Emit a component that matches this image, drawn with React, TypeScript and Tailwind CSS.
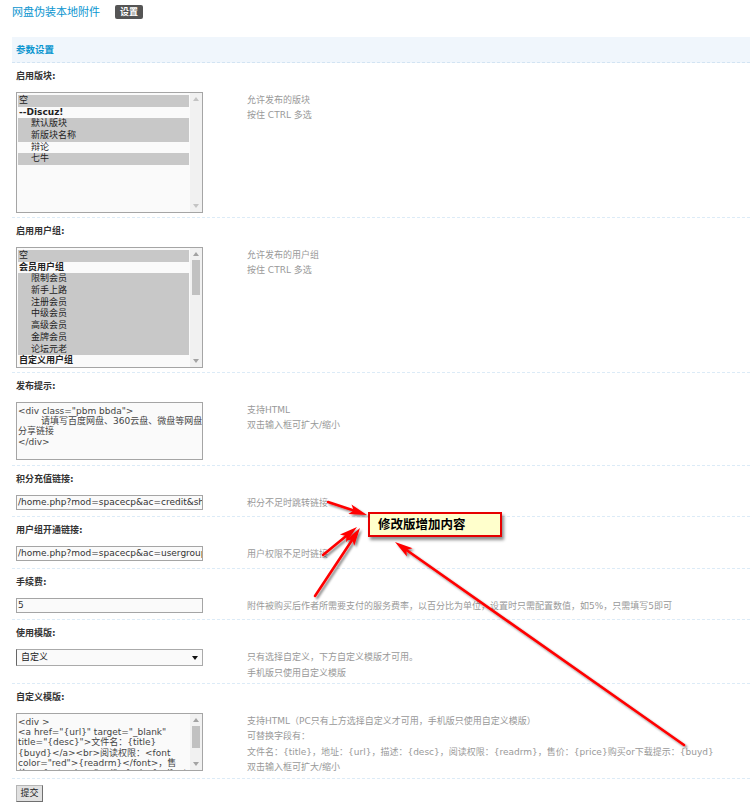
import React from "react";

type Opt = { t: string; sel?: boolean; bold?: boolean; sub?: boolean };

const forums: Opt[] = [
  { t: "空", sel: true },
  { t: "--Discuz!", bold: true },
  { t: "默认版块", sel: true, sub: true },
  { t: "新版块名称", sel: true, sub: true },
  { t: "辩论", sub: true },
  { t: "七牛", sel: true, sub: true },
];

const groups: Opt[] = [
  { t: "空", sel: true },
  { t: "会员用户组", bold: true },
  { t: "限制会员", sel: true, sub: true },
  { t: "新手上路", sel: true, sub: true },
  { t: "注册会员", sel: true, sub: true },
  { t: "中级会员", sel: true, sub: true },
  { t: "高级会员", sel: true, sub: true },
  { t: "金牌会员", sel: true, sub: true },
  { t: "论坛元老", sel: true, sub: true },
  { t: "自定义用户组", bold: true },
];

const tipLines: React.ReactNode[] = [
  '<div class="pbm bbda">',
  <>
    <span className="inline-block w-[23px]" />
    请填写百度网盘、360云盘、微盘等网盘
  </>,
  "分享链接",
  "</div>",
];

const tplLines: React.ReactNode[] = [
  "<div >",
  '<a href="{url}" target="_blank" ',
  'title="{desc}">文件名：{title}',
  "{buyd}</a><br>阅读权限：<font ",
  'color="red">{readrm}</font>，售',
  '价：<font color="red">{price}</font>',
];

function Tri({ down, color }: { down?: boolean; color: string }) {
  return (
    <svg width="6" height="4" viewBox="0 0 6 4">
      <path d={down ? "M0 0H6L3 4Z" : "M0 4H6L3 0Z"} fill={color} />
    </svg>
  );
}

function Scrollbar({ thumb, dim }: { thumb?: number; dim?: boolean }) {
  const c = dim ? "#c4c4c4" : "#a3a3a3";
  return (
    <div className="flex w-[12px] shrink-0 flex-col bg-[#f1f1f1]">
      <div className="flex h-[12px] items-center justify-center">
        <Tri color={c} />
      </div>
      {thumb ? <div className="mx-[2px] w-[8px] bg-[#c1c1c1]" style={{ height: thumb }} /> : null}
      <div className="flex-1" />
      <div className="flex h-[12px] items-center justify-center">
        <Tri down color={c} />
      </div>
    </div>
  );
}

function ListBox({ items, thumb, dim }: { items: Opt[]; thumb?: number; dim?: boolean }) {
  return (
    <div className="flex h-[121px] w-[187px] shrink-0 border border-[#a5a5a5] bg-[#fafafa]">
      <div className="flex-1 overflow-hidden pl-[1px] pr-[1px] pt-[2px]">
        {items.map((o, i) => (
          <div
            key={i}
            className={`h-[11.7px] whitespace-nowrap leading-[11.7px] text-[#222] ${o.sel ? "bg-[#c8c8c8]" : ""} ${
              o.bold ? "font-bold" : ""
            } ${o.sub ? "pl-[13px]" : "pl-[1px]"}`}
          >
            {o.t}
          </div>
        ))}
      </div>
      <Scrollbar thumb={thumb} dim={dim} />
    </div>
  );
}

function TextBox({ lines, thumb }: { lines: React.ReactNode[]; thumb?: number }) {
  return (
    <div className="flex h-[58px] w-[187px] shrink-0 border border-[#a5a5a5] bg-[#fafafa]">
      <div className="flex-1 overflow-hidden whitespace-pre pl-[1px] pt-[3px] leading-[10.2px] text-[#444]">
        {lines.map((l, i) => (
          <div key={i}>{l}</div>
        ))}
      </div>
      {thumb ? <Scrollbar thumb={thumb} /> : null}
    </div>
  );
}

function Input({ value }: { value: string }) {
  return (
    <div className="h-[15px] w-[187px] shrink-0 overflow-hidden whitespace-nowrap border border-[#a5a5a5] bg-[#fafafa] pl-[1px] leading-[13px] text-[#333]">
      {value}
    </div>
  );
}

function Row({
  label,
  first,
  pb,
  box,
  desc,
}: {
  label: string;
  first?: boolean;
  pb: string;
  box: React.ReactNode;
  desc: string[];
}) {
  return (
    <div className={first ? "" : "border-t border-dashed border-[#dcebf7]"}>
      <div className="h-[29px] pl-[4px] pt-[7px] font-bold leading-[12px] text-[#333]">{label}</div>
      <div className={`flex pl-[4px] ${pb}`}>
        {box}
        <div className="ml-[44px] whitespace-nowrap pt-[1px] leading-[15.4px] text-[#999]">
          {desc.map((d, i) => (
            <div key={i}>{d}</div>
          ))}
        </div>
      </div>
    </div>
  );
}

function Arrow({ x1, y1, x2, y2 }: { x1: number; y1: number; x2: number; y2: number }) {
  const len = Math.hypot(x2 - x1, y2 - y1);
  const ux = (x2 - x1) / len;
  const uy = (y2 - y1) / len;
  const px = -uy;
  const py = ux;
  const hl = 18;
  const hw = 5;
  const bx = x2 - ux * hl;
  const by = y2 - uy * hl;
  const nx = x2 - ux * (hl - 4);
  const ny = y2 - uy * (hl - 4);
  const pts = [
    [x2, y2],
    [bx + px * hw, by + py * hw],
    [nx, ny],
    [bx - px * hw, by - py * hw],
  ]
    .map((p) => p.join(","))
    .join(" ");
  return (
    <g filter="url(#sh)">
      <line x1={x1} y1={y1} x2={nx} y2={ny} stroke="#ff0000" strokeWidth="2.6" strokeLinecap="round" />
      <polygon points={pts} fill="#ff0000" />
    </g>
  );
}

export default function App() {
  return (
    <div className="relative h-[808px] w-[750px] overflow-hidden bg-white font-['DejaVu_Sans','Noto_Sans_CJK_SC',sans-serif] text-[9px] text-[#333]">
      <div className="flex h-[37px] items-start pl-[12px]">
        <span className="mt-[7px] text-[11px] leading-[12px] text-[#0a95cf]">网盘伪装本地附件</span>
        <span className="ml-[15px] mt-[5px] h-[14px] rounded-[2px] bg-[#555] px-[5px] text-[9px] font-bold leading-[14px] text-white">
          设置
        </span>
      </div>

      <div className="ml-[12px]">
        <div className="h-[26px] border-b border-dashed border-[#d3e4f3] bg-[#f0f6fc] pl-[4px] text-[9.5px] font-bold leading-[25px] text-[#0a95cf]">
          参数设置
        </div>

        <Row first label="启用版块:" pb="pb-[4px]" box={<ListBox items={forums} dim />} desc={["允许发布的版块", "按住 CTRL 多选"]} />
        <Row label="启用用户组:" pb="pb-[4px]" box={<ListBox items={groups} thumb={35} />} desc={["允许发布的用户组", "按住 CTRL 多选"]} />
        <Row label="发布提示:" pb="pb-[5px]" box={<TextBox lines={tipLines} />} desc={["支持HTML", "双击输入框可扩大/缩小"]} />
        <Row label="积分充值链接:" pb="pb-[5px]" box={<Input value="/home.php?mod=spacecp&ac=credit&showcredit=1" />} desc={["积分不足时跳转链接"]} />
        <Row label="用户组开通链接:" pb="pb-[5px]" box={<Input value="/home.php?mod=spacecp&ac=usergroup" />} desc={["用户权限不足时链接"]} />
        <Row
          label="手续费:"
          pb="pb-[5px]"
          box={<Input value=" 5" />}
          desc={["附件被购买后作者所需要支付的服务费率，以百分比为单位，设置时只需配置数值，如5%，只需填写5即可"]}
        />
        <Row
          label="使用模版:"
          pb="pb-[2px]"
          box={
            <div className="flex h-[17px] w-[187px] shrink-0 items-center justify-between border border-[#aaa] border-l-[#666] bg-[#fafafa] pl-[4px] pr-[4px] text-[#222]">
              <span>自定义</span>
              <Tri down color="#111" />
            </div>
          }
          desc={["只有选择自定义，下方自定义模版才可用。", "手机版只使用自定义模版"]}
        />
        <Row
          label="自定义模版:"
          pb="pb-[2px]"
          box={<TextBox lines={tplLines} thumb={22} />}
          desc={[
            "支持HTML（PC只有上方选择自定义才可用，手机版只使用自定义模版）",
            "可替换字段有：",
            "文件名：{title}，地址：{url}，描述：{desc}，阅读权限：{readrm}，售价：{price}购买or下载提示：{buyd}",
            "双击输入框可扩大/缩小",
          ]}
        />
        <div className="border-t border-dashed border-[#dcebf7] pl-[4px] pt-[6px]">
          <button className="h-[17px] w-[27px] border border-[#b5b5b5] border-b-[#707070] border-r-[#707070] bg-[#e1e1e1] text-[9px] leading-[15px] text-[#222]">
            提交
          </button>
        </div>
      </div>

      <div className="absolute left-[368px] top-[512px] h-[25px] w-[134px] border-2 border-[#e60000] bg-[#ffffcc] pl-[8px] text-[12.5px] font-bold leading-[21px] text-black shadow-[2px_3px_3px_rgba(0,0,0,0.45)]">
        修改版增加内容
      </div>

      <svg className="pointer-events-none absolute left-0 top-0" width="750" height="808">
        <defs>
          <filter id="sh" x="-20%" y="-20%" width="140%" height="140%">
            <feDropShadow dx="2" dy="2" stdDeviation="1.2" floodColor="#000" floodOpacity="0.45" />
          </filter>
        </defs>
        <Arrow x1={328} y1={502} x2={367} y2={515} />
        <Arrow x1={323} y1={555} x2={357} y2={527} />
        <Arrow x1={315} y1={596} x2={360} y2={528} />
        <Arrow x1={684} y1={745} x2={395} y2={542} />
      </svg>
    </div>
  );
}
